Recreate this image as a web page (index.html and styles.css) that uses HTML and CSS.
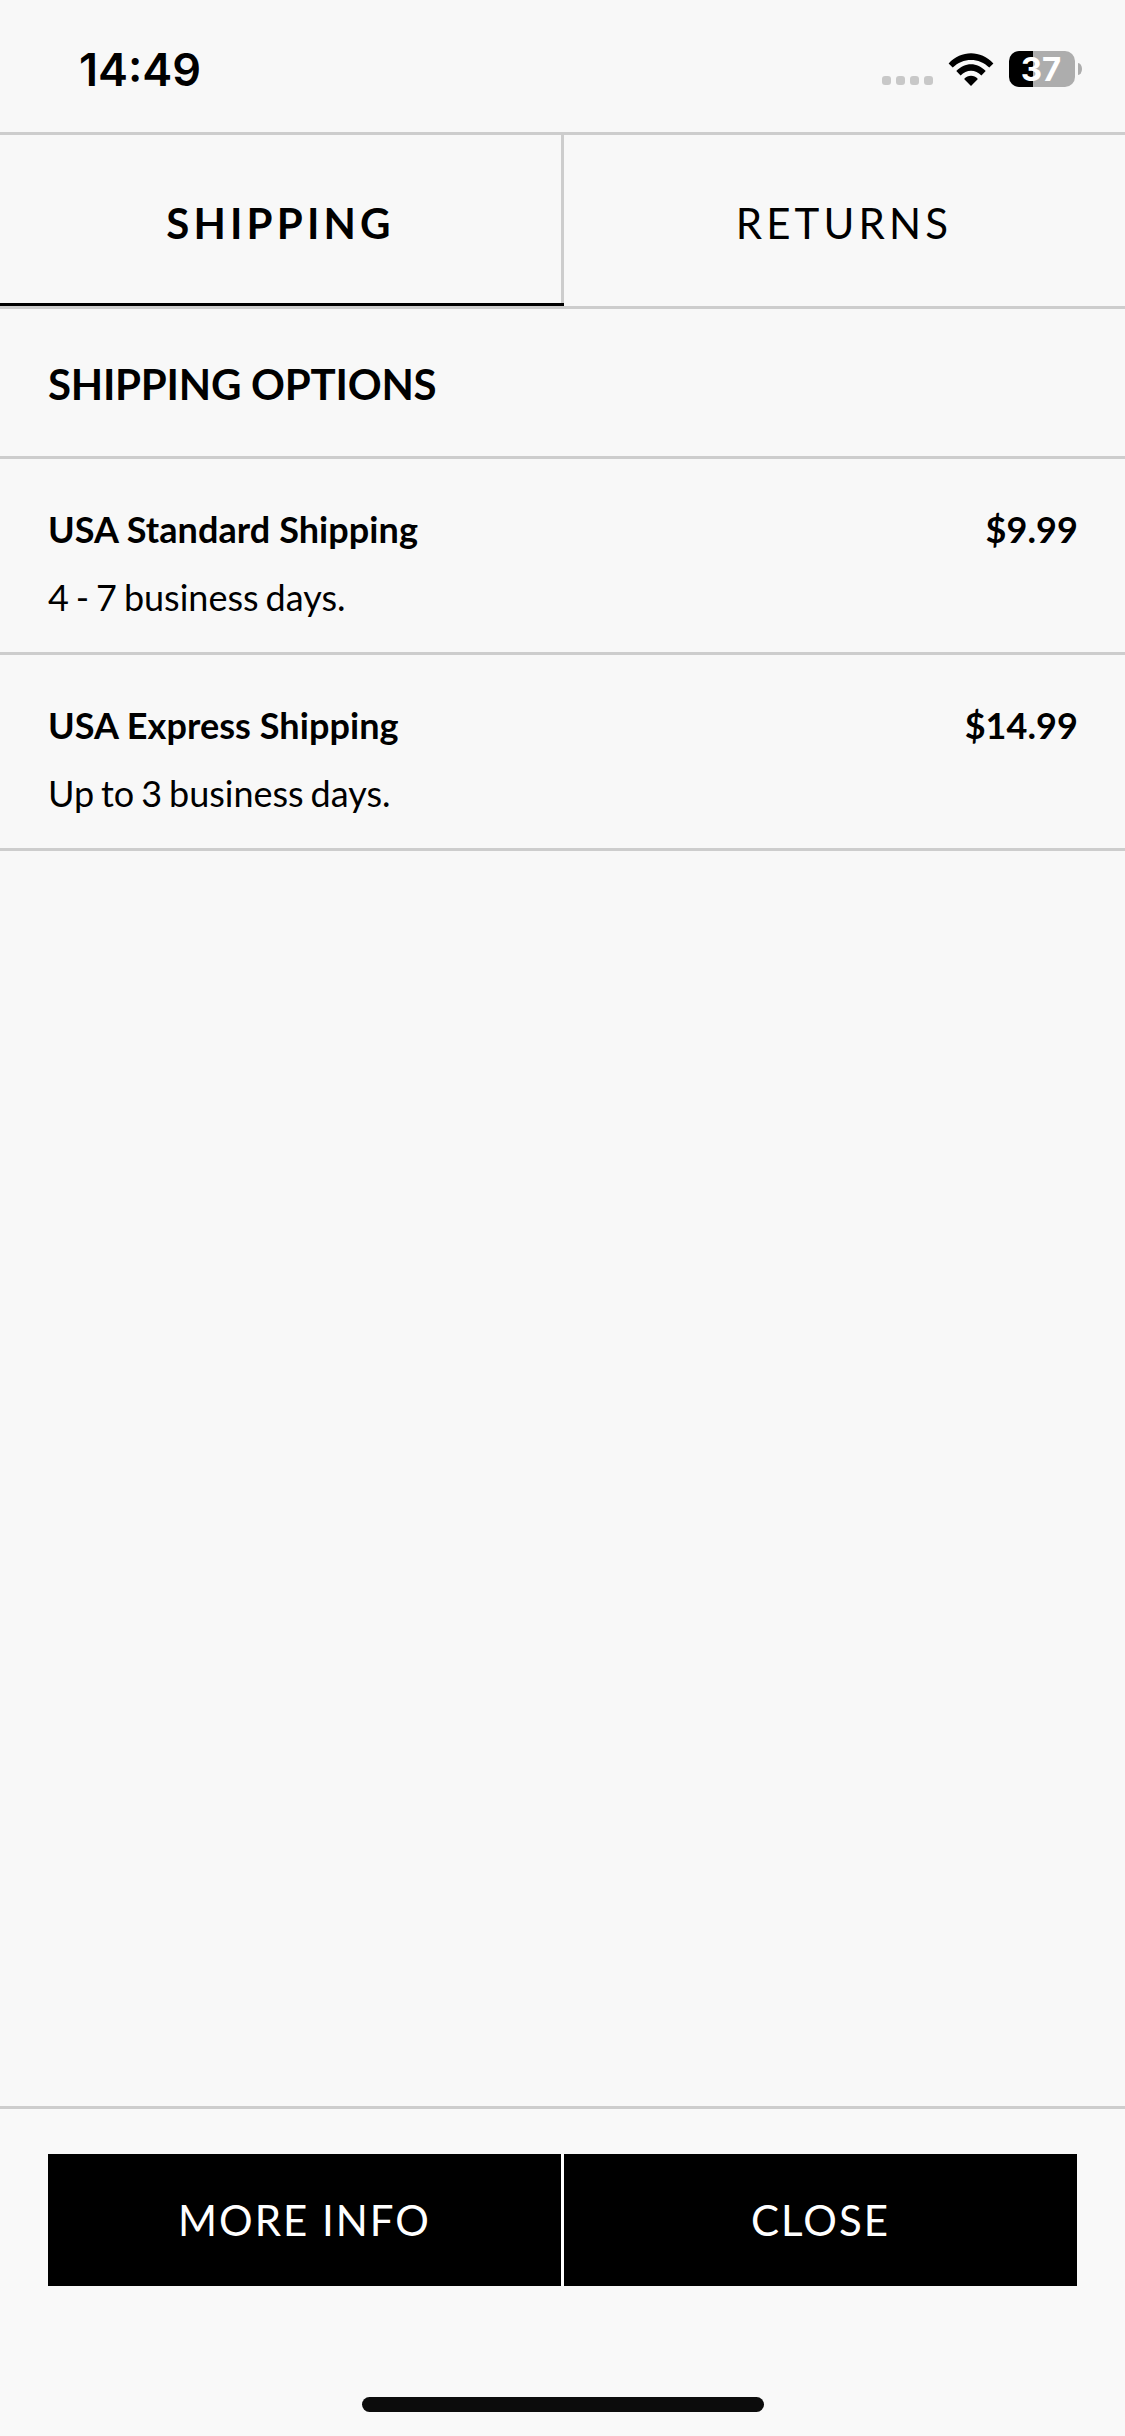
FILE: index.html
```html
<!DOCTYPE html>
<html lang="en">
<head>
<meta charset="utf-8">
<title>Shipping</title>
<link rel="stylesheet" href="styles.css">
</head>
<body>
<header class="status">
  <span class="time">14:49</span>
  <div class="indicators">
    <span class="dots"><i></i><i></i><i></i><i></i></span>
    <svg class="wifi" width="46" height="33" viewBox="0 0 46 33"><path d="M.6 10.5C13.2-3.2 32.8-3.2 45.4 10.5L41.3 14.6C31.3 4.3 14.7 4.3 4.7 14.6Z"/><path d="M8.3 18.1C16.5 8.9 29.5 8.9 37.7 18.1L33.4 22.4C27.6 16.1 18.4 16.1 12.6 22.4Z"/><path d="M16.1 26C20 21.8 26 21.8 29.9 26L23 33Z"/></svg>
    <div class="battery"><span class="cell">37</span><span class="cap"></span></div>
  </div>
</header>
<nav class="tabs"><a class="tab active">SHIPPING</a><a class="tab">RETURNS</a></nav>
<main class="content">
  <h1 class="title">SHIPPING OPTIONS</h1>
  <section class="option"><div class="row"><span>USA Standard Shipping</span><span>$9.99</span></div><p class="eta">4 - 7 business days.</p></section>
  <section class="option"><div class="row"><span>USA Express Shipping</span><span>$14.99</span></div><p class="eta">Up to 3 business days.</p></section>
</main>
<footer class="footer">
  <div class="actions"><button class="button">MORE INFO</button><button class="button">CLOSE</button></div>
  <div class="home"></div>
</footer>
</body>
</html>
```
FILE: styles.css
```css
* { box-sizing: border-box; margin: 0; }
body { width: 1125px; height: 2436px; display: flex; flex-direction: column; background: #f8f8f8; color: #000; font-family: Lato, sans-serif; }
.status { height: 132px; padding: 0 43px 0 79px; display: flex; align-items: center; justify-content: space-between; }
.time { font: 600 45px/60px Inter, sans-serif; padding-top: 7px; }
.indicators { display: flex; align-items: center; padding-top: 6px; }
.dots { display: flex; gap: 5px; padding-top: 22px; }
.dots i { width: 9px; height: 9px; border-radius: 3px; background: #c8c8c8; }
.wifi { margin: 0 15px 0 15px; }
.battery { display: flex; align-items: center; gap: 3px; }
.cell { width: 66px; height: 36px; padding-right: 2px; border-radius: 10px; background: linear-gradient(90deg, #000 24px, #adadad 24px); color: #fff; font: 700 33px/36px Inter, sans-serif; text-align: center; }
.cap { width: 4px; height: 12px; border-radius: 0 4px 4px 0 / 0 6px 6px 0; background: #adadad; }
.tabs { height: 177px; display: flex; border-top: 3px solid #cdcdcd; border-bottom: 3px solid #cdcdcd; }
.tab { flex: 1; display: flex; align-items: center; justify-content: center; padding: 5px 1px 0 0; font-size: 42px; letter-spacing: 4.15px; }
.active { flex: 0 0 564px; padding-right: 3px; font-weight: 700; box-shadow: inset 0 -3px #000, inset -3px 0 #cdcdcd; }
.content { flex: 1; }
.title { height: 150px; padding: 0 48px; border-bottom: 3px solid #cdcdcd; font: 700 42px/151px Lato, sans-serif; letter-spacing: -0.25px; }
.option { height: 196px; padding: 36px 47px 0 48px; border-bottom: 3px solid #cdcdcd; font-size: 36px; }
.row { display: flex; justify-content: space-between; font-weight: 700; line-height: 68px; letter-spacing: 0.07px; }
.eta { line-height: 68px; word-spacing: -2.3px; }
.footer { height: 330px; padding: 45px 48px 0; border-top: 3px solid #cdcdcd; background: #f9f9f9; display: flex; flex-direction: column; }
.actions { display: flex; gap: 3px; background: #fff; }
.button { flex: 1; height: 132px; padding: 0; border: 0; border-radius: 0; background: #000; color: #fff; font: 400 42px Lato, sans-serif; letter-spacing: 2px; }
.home { width: 402px; height: 15px; margin: 111px auto 0; border-radius: 8px; background: #0c0c0c; }
```
